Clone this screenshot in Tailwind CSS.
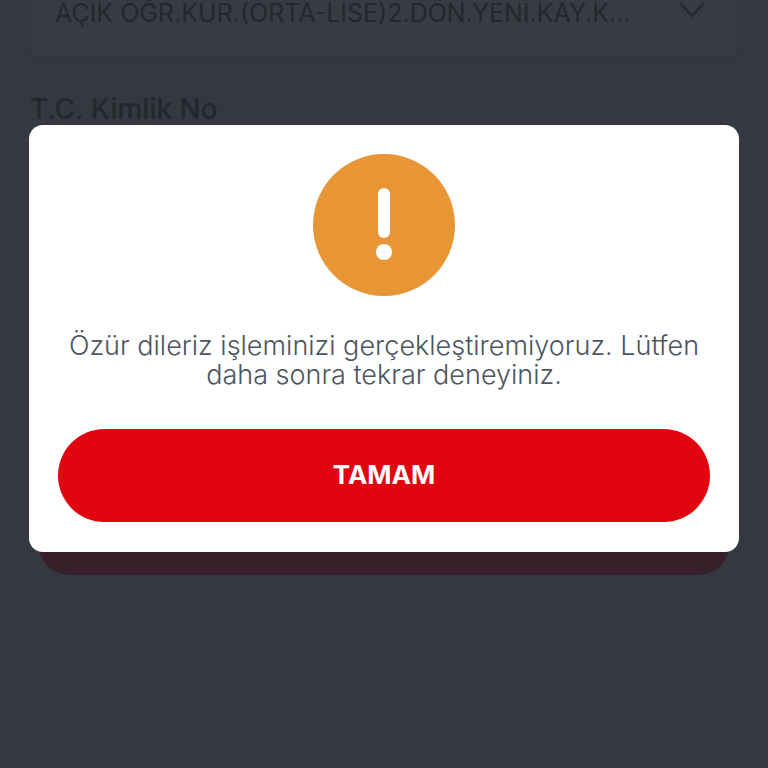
<!DOCTYPE html>
<html lang="tr">
<head>
    <meta charset="UTF-8">
    <meta name="viewport" content="width=device-width, initial-scale=1.0">
    <title>Uyarı</title>
    <script src="https://cdn.jsdelivr.net/npm/@tailwindcss/browser@4"></script>
</head>
<body class="bg-[#353840] font-['Inter','Noto_Sans',sans-serif]">
    <div class="relative w-[768px] h-[768px] overflow-hidden">
        <!-- Page behind the overlay -->
        <div class="px-[30px]">
            <div class="flex justify-between items-start h-[58px] -mt-px pl-[24px] pr-[32px] border border-[#30333b] bg-[#383b44] rounded-b-[4px]">
                <span class="text-[25px] leading-[26px] text-[#25272d] whitespace-nowrap">AÇIK ÖĞR.KUR.(ORTA-LİSE)2.DÖN.YENİ.KAY.K...</span>
                <svg class="mt-[2px]" width="26" height="16" viewBox="0 0 26 16" fill="none" stroke="#25272d" stroke-width="2"><path d="M1 1l12 13L25 1"/></svg>
            </div>
            <div class="mt-[36px] text-[28px] leading-[32px] font-medium text-[#25272d]">T.C. Kimlik No</div>
        </div>

        <!-- Dialog -->
        <div class="absolute left-[29px] top-[125px] w-[710px]">
            <div class="absolute left-[9px] right-[9px] top-[60px] h-[390px] rounded-[32px] bg-[#37202a]"></div>
            <div class="relative flex flex-col items-center h-[427px] pt-[29px] px-[29px] rounded-[14px] bg-white">
                <div class="flex flex-col items-center w-[142px] h-[142px] pt-[34px] rounded-full bg-[#e89536]">
                    <div class="w-[12px] h-[50px] rounded-full bg-white"></div>
                    <div class="w-[16px] h-[16px] mt-[6px] rounded-full bg-white"></div>
                </div>
                <p class="mt-[35px] w-full text-center text-[27px] leading-[29px] font-light text-[#4d5560]">Özür dileriz işleminizi gerçekleştiremiyoruz. Lütfen<br>daha sonra tekrar deneyiniz.</p>
                <button class="mt-[40px] w-full h-[93px] rounded-full bg-[#e10510] text-white text-[26px] font-bold pb-[2px]">TAMAM</button>
            </div>
        </div>
    </div>
</body>
</html>
